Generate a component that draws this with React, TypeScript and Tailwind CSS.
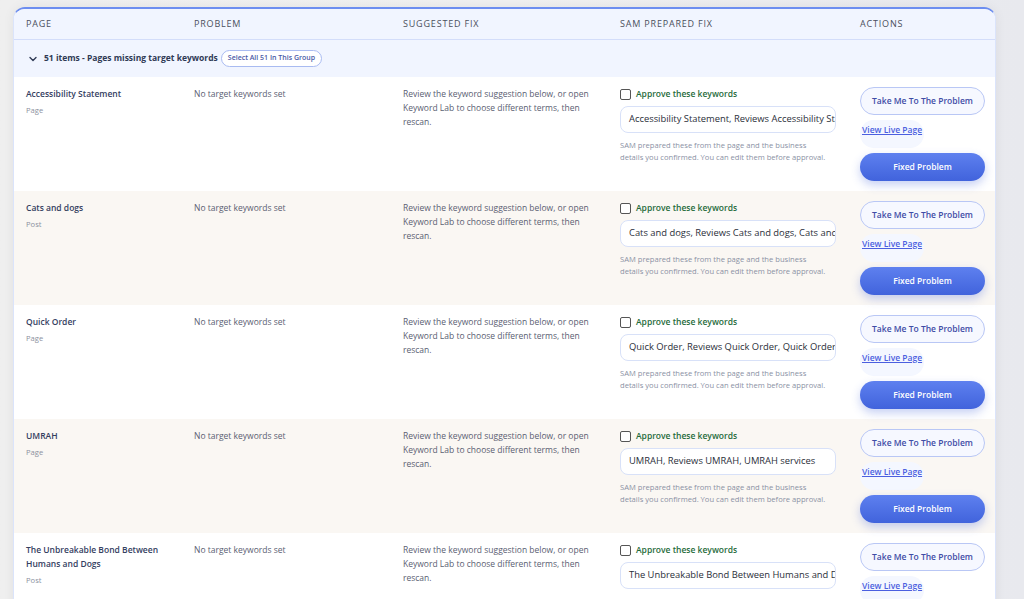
import React from 'react';
import { ChevronDown } from 'lucide-react';

type Row = {
  title: string;
  kind: string;
  keywords: string;
};

const ROWS: Row[] = [
  { title: 'Accessibility Statement', kind: 'Page', keywords: 'Accessibility Statement, Reviews Accessibility Statement, Accessibility Statement services' },
  { title: 'Cats and dogs', kind: 'Post', keywords: 'Cats and dogs, Reviews Cats and dogs, Cats and dogs services' },
  { title: 'Quick Order', kind: 'Page', keywords: 'Quick Order, Reviews Quick Order, Quick Order services' },
  { title: 'UMRAH', kind: 'Page', keywords: 'UMRAH, Reviews UMRAH, UMRAH services' },
  { title: 'The Unbreakable Bond Between Humans and Dogs', kind: 'Post', keywords: 'The Unbreakable Bond Between Humans and Dogs, Reviews' },
];

const GRID = 'grid grid-cols-[168px_209px_217px_240px_1fr] px-3';

function IssueRow({ row, index }: { row: Row; index: number }) {
  const shaded = index % 2 === 1;
  return (
    <div className={`${GRID} h-[114px] items-start ${shaded ? 'bg-[#faf7f3]' : 'bg-white'}`}>
      {/* Page */}
      <div className="pt-[10px] pr-3">
        <div className="text-[8.5px] leading-[14px] font-semibold text-[#34405f]">{row.title}</div>
        <div className="mt-[3px] text-[7.6px] leading-[12px] text-[#8c91a0]">{row.kind}</div>
      </div>

      {/* Problem */}
      <div className="pt-[10px] text-[8.5px] leading-[14px] text-[#5a6072]">No target keywords set</div>

      {/* Suggested fix */}
      <div className="pt-[10px] pr-3 text-[8.5px] leading-[14px] text-[#5a6072]">
        Review the keyword suggestion below, or open Keyword Lab to choose different terms, then rescan.
      </div>

      {/* SAM prepared fix */}
      <div className="pt-[11px] pr-6">
        <label className="flex items-center gap-[5px]">
          <span className="block h-[11px] w-[11px] rounded-[2px] border border-[#555] bg-white" />
          <span className="text-[8.5px] leading-[12px] font-semibold text-[#1f6b3b]">Approve these keywords</span>
        </label>
        <div className="mt-[6px] flex h-[27px] items-center overflow-hidden whitespace-nowrap rounded-[8px] border border-[#d8e1f8] bg-white px-2 text-[9.4px] text-[#2b2f3a]">
          {row.keywords}
        </div>
        <p className="mt-[6px] whitespace-nowrap text-[7.6px] leading-[12px] text-[#8a91a4]">
          SAM prepared these from the page and the business
          <br />
          details you confirmed. You can edit them before approval.
        </p>
      </div>

      {/* Actions */}
      <div className="flex flex-col items-start pt-[10px]">
        <button className="h-[28px] w-[125px] rounded-full border border-[#b9c7f5] bg-[#f6f8ff] text-[8.5px] font-semibold text-[#3f4ca6]">
          Take Me To The Problem
        </button>
        <div className="mt-[5px] h-[28px] whitespace-nowrap rounded-full bg-[#f4f7ff] px-[2px] pt-[4px] text-[8.5px] leading-[12px]">
          <a className="font-semibold text-[#4b5fe0] underline">View Live Page</a>
        </div>
        <button className="mt-[5px] h-[28px] w-[125px] rounded-full bg-gradient-to-b from-[#5e80ef] to-[#4163dc] text-[8.5px] font-semibold text-white shadow-[0_4px_10px_rgba(66,99,220,0.3)]">
          Fixed Problem
        </button>
      </div>
    </div>
  );
}

export default function App() {
  return (
    <div className="h-[599px] overflow-hidden bg-gradient-to-r from-[#efefef] via-[#f0f0f0] to-[#e8e9ee] pl-[13px] pr-[28px] pt-[7px] font-['Open_Sans','Noto_Sans',sans-serif]">
      <div className="overflow-hidden rounded-t-[12px] border-x border-t-2 border-x-[#dbe4fb] border-t-[#6d8ef0] bg-white shadow-[0_0_12px_rgba(0,0,0,0.06)]">
        {/* Header */}
        <div className={`${GRID} h-[31px] items-center border-b border-[#d3ddfa] bg-[#f1f5ff] text-[9px] tracking-[0.09em] text-[#4a4f5c]`}>
          <div>PAGE</div>
          <div>PROBLEM</div>
          <div>SUGGESTED FIX</div>
          <div>SAM PREPARED FIX</div>
          <div>ACTIONS</div>
        </div>

        {/* Group */}
        <div className="flex h-[37px] items-center bg-[#f1f5ff] pl-[13px]">
          <ChevronDown size={12} strokeWidth={2.75} className="text-[#2f3a55]" />
          <span className="ml-[5px] text-[8.5px] font-bold text-[#2f3a55]">51 items - Pages missing target keywords</span>
          <button className="ml-[3px] h-[17px] rounded-full border border-[#a9bbf1] bg-white px-[6px] text-[7px] font-semibold text-[#4a59a6]">
            Select All 51 In This Group
          </button>
        </div>

        {ROWS.map((row, i) => (
          <IssueRow key={row.title} row={row} index={i} />
        ))}
      </div>
    </div>
  );
}
